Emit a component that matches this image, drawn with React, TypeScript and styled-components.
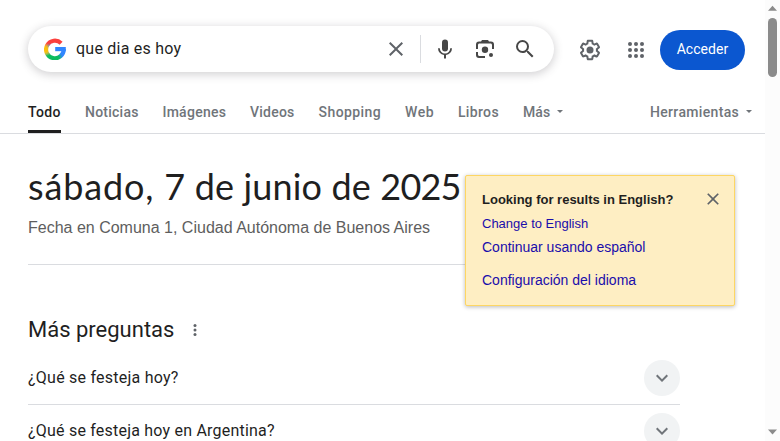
import React from 'react';
import styled, { createGlobalStyle } from 'styled-components';

const GlobalStyle = createGlobalStyle`
  * { box-sizing: border-box; }
  body { margin: 0; background: #fff; color: #1f1f1f; font-family: Roboto, Arial, sans-serif; overflow: hidden; }
  button, a { font: inherit; color: inherit; text-decoration: none; border: 0; padding: 0; background: none; cursor: pointer; }
  svg { display: block; flex: none; }
`;

const Viewport = styled.div`
  display: grid;
  grid-template-columns: 1fr 15px;
  height: 441px;
  overflow: hidden;
`;
const Page = styled.div`
  position: relative;
  min-width: 0;
  height: 441px;
  overflow: hidden;
`;

/* Header */
const Header = styled.header`
  display: flex;
  padding: 26px 20px 0 28px;
  height: 90px;
`;
const SearchBox = styled.form`
  display: flex;
  align-items: center;
  width: 526px;
  height: 46px;
  padding: 0 9px 0 16px;
  border-radius: 23px;
  background: #fff;
  box-shadow: 0 2px 8px 1px rgba(64, 60, 67, 0.22);
`;
const Query = styled.span`
  flex: 1;
  margin-left: 10px;
  font-size: 16px;
  line-height: 22px;
  letter-spacing: 0.24px;
`;
const IconButton = styled.button<{ $width: number }>`
  display: flex;
  align-items: center;
  justify-content: center;
  width: ${p => p.$width}px;
  height: 46px;
`;
const Separator = styled.span`
  width: 1px;
  height: 28px;
  margin: 0 4px 0 12px;
  background: #dadce0;
`;
const Account = styled.div`
  display: flex;
  align-items: center;
  height: 48px;
  margin-left: 13px;
`;
const SignIn = styled.a`
  width: 85px;
  height: 40px;
  margin-left: 1px;
  border-radius: 20px;
  background: #0b57d0;
  color: #fff;
  font-size: 14px;
  font-weight: 400;
  line-height: 38px;
  letter-spacing: 0.06px;
  text-align: center;
`;

/* Tabs */
const TabBar = styled.nav`
  display: flex;
  justify-content: space-between;
  height: 44px;
  padding: 0 13px 0 28px;
  border-bottom: 1px solid #dadce0;
`;
const TabGroup = styled.div`
  display: flex;
  gap: 24px;
`;
const Tab = styled.a<{ $width: number; $track: number; $active?: boolean }>`
  display: flex;
  align-items: center;
  gap: 6.5px;
  width: ${p => p.$width}px;
  height: 43px;
  padding-top: 3px;
  border-bottom: 3px solid ${p => (p.$active ? '#1f1f1f' : 'transparent')};
  color: ${p => (p.$active ? '#1f1f1f' : '#70757a')};
  font-size: 14px;
  font-weight: 500;
  line-height: 20px;
  letter-spacing: ${p => p.$track}px;
  white-space: nowrap;
`;
const Caret = styled.span`
  width: 0;
  height: 0;
  border: 3.5px solid transparent;
  border-top-color: #70757a;
  border-bottom: 0;
`;

/* Results */
const Results = styled.main`
  width: 680px;
  padding-left: 28px;
`;
const DateAnswer = styled.section`
  height: 131px;
  padding-top: 30px;
  border-bottom: 1px solid #dadce0;
`;
const DateText = styled.h1`
  margin: 0;
  font: 400 36px/44px Lato, sans-serif;
  letter-spacing: 0.2px;
  white-space: nowrap;
`;
const DatePart = styled.span<{ $track: number }>`
  letter-spacing: ${p => p.$track}px;
`;
const DateCaption = styled.p`
  margin: 8px 0 0;
  color: #5e5e5e;
  font: 16px/24px "Liberation Sans", Arial, sans-serif;
`;
const SectionHead = styled.div`
  display: flex;
  align-items: center;
  gap: 13px;
  padding: 51px 0 8px;
`;
const SectionTitle = styled.h2`
  margin: 0;
  font-size: 22px;
  font-weight: 400;
  line-height: 28px;
`;
const Question = styled.div`
  display: flex;
  align-items: center;
  justify-content: space-between;
  height: 53px;
  border-bottom: 1px solid #dadce0;
`;
const QuestionText = styled.span<{ $track: number }>`
  padding-bottom: 2px;
  font-size: 16px;
  letter-spacing: ${p => p.$track}px;
`;
const Expand = styled.button`
  display: flex;
  align-items: center;
  justify-content: center;
  width: 36px;
  height: 36px;
  border-radius: 50%;
  background: #f1f3f4;
`;

/* Language notice */
const Notice = styled.aside`
  position: absolute;
  top: 175px;
  left: 465px;
  display: flex;
  justify-content: space-between;
  align-items: flex-start;
  width: 270px;
  height: 131px;
  padding: 13px 11px 0 16px;
  border: 1px solid #fdd663;
  border-radius: 2px;
  background: #feeec3;
  box-shadow: 0 1px 4px rgba(0, 0, 0, 0.28);
  font-family: "Liberation Sans", Arial, sans-serif;
`;
const NoticeBody = styled.div`
  display: flex;
  flex-direction: column;
  padding-top: 2px;
`;
const NoticeTitle = styled.strong`
  font-size: 13px;
  line-height: 18px;
`;
const NoticeLink = styled.a<{ $size: number; $gap: number }>`
  margin-top: ${p => p.$gap}px;
  color: #1a0dab;
  font-size: ${p => p.$size}px;
  line-height: 18px;
`;

/* Scrollbar */
const ScrollTrack = styled.div`
  display: flex;
  flex-direction: column;
  align-items: center;
  justify-content: space-between;
  padding: 5px 0 6px;
  background: #fcfcfc;
`;
const ScrollTop = styled.div`
  display: flex;
  flex-direction: column;
  align-items: center;
  gap: 7px;
`;
const Thumb = styled.div`
  width: 9px;
  height: 59px;
  border-radius: 5px;
  background: #8b8b8b;
`;

function GoogleMark() {
  return (
    <svg width="22" height="22" viewBox="0 0 22 22">
      <defs>
        <mask id="g-shape" maskUnits="userSpaceOnUse" x="0" y="0" width="22" height="22">
          <path d="M17.1 5.2A8.8 8.8 0 1 0 19.7 11" fill="none" stroke="#fff" strokeWidth="4.2" />
          <path d="M11.2 9h10.6v4.2H11.2z" fill="#fff" />
        </mask>
        <filter id="g-blend" x="-30%" y="-30%" width="160%" height="160%">
          <feGaussianBlur stdDeviation="1.1" />
        </filter>
      </defs>
      <g mask="url(#g-shape)">
        <path d="M0 0h22v22H0z" fill="#3186ff" />
        <g filter="url(#g-blend)">
          <path d="M-4-4h30V7H11L2 7h-6z" fill="#fc413d" />
          <path d="M-4 7h7l4 4-3 6h-8z" fill="#fbc00a" />
          <path d="M-4 16h6l5-2 4 1 5 2 1 3v6H-4z" fill="#0ebc5f" />
        </g>
      </g>
    </svg>
  );
}

const CloseIcon = ({ size }: { size: number }) => (
  <svg width={size} height={size} viewBox="0 0 24 24" fill="#5f6368">
    <path d="M19 6.41 17.59 5 12 10.59 6.41 5 5 6.41 10.59 12 5 17.59 6.41 19 12 13.41 17.59 19 19 17.59 13.41 12z" />
  </svg>
);
const MicIcon = () => (
  <svg width="24" height="24" viewBox="0 0 24 24" fill="#474747">
    <path d="M12 14.5a3 3 0 0 0 3-3v-6a3 3 0 0 0-6 0v6a3 3 0 0 0 3 3z" />
    <path d="M17.2 11.2a5.2 5.2 0 0 1-10.4 0H5a7 7 0 0 0 6 6.9V21.5h2v-3.4a7 7 0 0 0 6-6.9z" />
  </svg>
);
const LensIcon = () => (
  <svg width="24" height="24" viewBox="0 0 24 24" fill="#474747">
    <path d="M9 3h6l1 1.5h2a3 3 0 0 1 3 3V12h-2V8c0-.9-.6-1.5-1.5-1.5h-11C5.6 6.5 5 7.1 5 8v4H3V7.5a3 3 0 0 1 3-3h2z" />
    <path d="M3 15h2v2.5c0 .9.6 1.5 1.5 1.5H12v2H6a3 3 0 0 1-3-3z" />
    <circle cx="12" cy="12.8" r="3.2" />
    <circle cx="18" cy="18" r="2" />
  </svg>
);
const SearchIcon = () => (
  <svg width="24" height="24" viewBox="0 0 24 24" fill="#474747">
    <path d="M15.5 14h-.79l-.28-.27A6.47 6.47 0 0 0 16 9.5 6.5 6.5 0 1 0 9.5 16c1.61 0 3.09-.59 4.23-1.57l.27.28v.79l5 4.99L20.49 19zm-6 0a4.5 4.5 0 1 1 0-9 4.5 4.5 0 0 1 0 9z" />
  </svg>
);
const GearIcon = () => (
  <svg width="24" height="24" viewBox="0 0 24 24" fill="#5f6368">
    <path d="M13.85 22.25h-3.7c-.74 0-1.36-.54-1.45-1.27l-.27-1.89c-.27-.14-.53-.29-.79-.46l-1.8.72c-.7.26-1.47-.03-1.81-.65L2.2 15.53c-.35-.66-.2-1.44.36-1.88l1.53-1.19c-.01-.15-.02-.3-.02-.46 0-.15.01-.31.02-.46l-1.52-1.19c-.59-.45-.74-1.26-.37-1.88l1.85-3.19c.34-.62 1.11-.9 1.79-.63l1.81.73c.26-.17.52-.32.78-.46l.27-1.91c.09-.7.71-1.25 1.44-1.25h3.7c.74 0 1.36.54 1.45 1.27l.27 1.89c.27.14.53.29.79.46l1.8-.72c.71-.26 1.48.03 1.82.65l1.84 3.18c.36.66.2 1.44-.36 1.88l-1.52 1.19c.01.15.02.3.02.46s-.01.31-.02.46l1.52 1.19c.56.45.72 1.23.37 1.86l-1.86 3.22c-.34.62-1.11.9-1.8.63l-1.8-.72c-.26.17-.52.32-.78.46l-.27 1.91c-.1.68-.72 1.22-1.46 1.22zm-3.23-2h2.76l.37-2.55.53-.22c.44-.18.88-.44 1.34-.78l.45-.34 2.38.96 1.38-2.4-2.03-1.58.07-.56c.03-.26.06-.51.06-.78s-.03-.53-.06-.78l-.07-.56 2.03-1.58-1.39-2.4-2.39.96-.45-.35c-.42-.32-.87-.58-1.33-.77l-.52-.22-.37-2.55h-2.76l-.37 2.55-.53.21c-.44.19-.88.44-1.34.79l-.45.33-2.38-.95-1.39 2.39 2.03 1.58-.07.56a7 7 0 0 0-.06.79c0 .26.02.53.06.78l.07.56-2.03 1.58 1.38 2.4 2.39-.96.45.35c.43.33.86.58 1.33.77l.53.22z" />
    <circle cx="12" cy="12" r="3.5" />
  </svg>
);
const AppsIcon = () => (
  <svg width="24" height="24" viewBox="0 0 24 24" fill="#5f6368">
    {[6, 12, 18].map(y => [6, 12, 18].map(x => <circle key={`${x}-${y}`} cx={x} cy={y} r="2" />))}
  </svg>
);
const MoreIcon = () => (
  <svg width="16" height="16" viewBox="0 0 16 16" fill="#5f6368">
    {[3.5, 8, 12.5].map(y => <circle key={y} cx="8" cy={y} r="1.5" />)}
  </svg>
);
const ChevronIcon = () => (
  <svg width="24" height="24" viewBox="0 0 24 24" fill="#70757a">
    <path d="M7.41 8.59 12 13.17l4.59-4.58L18 10l-6 6-6-6z" />
  </svg>
);
const ScrollArrow = ({ down = false }: { down?: boolean }) => (
  <svg width="9" height="6" viewBox="0 0 9 6" fill="#8b8b8b">
    <path d={down ? 'M0 .5h9L4.5 5.5z' : 'M4.5 .8 9 5.8H0z'} />
  </svg>
);

const tabs = [
  { label: 'Todo', width: 33, track: 0.4, active: true },
  { label: 'Noticias', width: 53.4, track: 0.24 },
  { label: 'Imágenes', width: 63.7, track: 0.28 },
  { label: 'Videos', width: 44.5, track: 0.22 },
  { label: 'Shopping', width: 62.4, track: 0.4 },
  { label: 'Web', width: 29, track: 0.55 },
  { label: 'Libros', width: 41, track: 0.34 },
];
const questions = [
  { text: '¿Qué se festeja hoy?', track: 0.24 },
  { text: '¿Qué se festeja hoy en Argentina?', track: 0.21 },
];

export default function App() {
  return (
    <Viewport>
      <GlobalStyle />
      <Page>
        <Header>
          <SearchBox>
            <GoogleMark />
            <Query>que dia es hoy</Query>
            <IconButton type="button" $width={24} aria-label="Borrar"><CloseIcon size={24} /></IconButton>
            <Separator />
            <IconButton type="button" $width={40} aria-label="Voz"><MicIcon /></IconButton>
            <IconButton type="button" $width={40} aria-label="Lens"><LensIcon /></IconButton>
            <IconButton type="button" $width={40} aria-label="Buscar"><SearchIcon /></IconButton>
          </SearchBox>
          <Account>
            <IconButton $width={46} aria-label="Ajustes"><GearIcon /></IconButton>
            <IconButton $width={46} aria-label="Aplicaciones"><AppsIcon /></IconButton>
            <SignIn>Acceder</SignIn>
          </Account>
        </Header>
        <TabBar>
          <TabGroup>
            {tabs.map(t => (
              <Tab key={t.label} $width={t.width} $track={t.track} $active={t.active}>{t.label}</Tab>
            ))}
            <Tab $width={42} $track={0.1}>Más <Caret /></Tab>
          </TabGroup>
          <Tab $width={102} $track={0.33}>Herramientas <Caret /></Tab>
        </TabBar>
        <Results>
          <DateAnswer>
            <DateText>
              <DatePart $track={0.85}>sábado, </DatePart>
              <DatePart $track={0.15}>7 de junio de </DatePart>
              <DatePart $track={-0.8}>2025</DatePart>
            </DateText>
            <DateCaption>Fecha en Comuna 1, Ciudad Autónoma de Buenos Aires</DateCaption>
          </DateAnswer>
          <SectionHead>
            <SectionTitle>Más preguntas</SectionTitle>
            <MoreIcon />
          </SectionHead>
          {questions.map(q => (
            <Question key={q.text}>
              <QuestionText $track={q.track}>{q.text}</QuestionText>
              <Expand aria-label="Mostrar más"><ChevronIcon /></Expand>
            </Question>
          ))}
        </Results>
        <Notice>
          <NoticeBody>
            <NoticeTitle>Looking for results in English?</NoticeTitle>
            <NoticeLink $size={13} $gap={6}>Change to English</NoticeLink>
            <NoticeLink $size={14} $gap={5}>Continuar usando español</NoticeLink>
            <NoticeLink $size={14} $gap={15}>Configuración del idioma</NoticeLink>
          </NoticeBody>
          <CloseIcon size={20} />
        </Notice>
      </Page>
      <ScrollTrack>
        <ScrollTop>
          <ScrollArrow />
          <Thumb />
        </ScrollTop>
        <ScrollArrow down />
      </ScrollTrack>
    </Viewport>
  );
}
